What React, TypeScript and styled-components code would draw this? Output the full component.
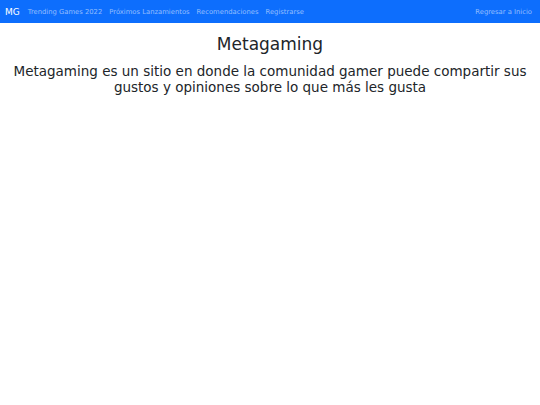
import React from "react";
import styled, { createGlobalStyle } from "styled-components";

const Global = createGlobalStyle`
  html, body { margin: 0; padding: 0; background: #fff; }
  body { font-family: "DejaVu Sans", sans-serif; color: #212529; }
`;

const Navbar = styled.nav`
  height: 23px;
  background: #0d6efd;
  display: flex;
  align-items: center;
  padding: 0 8px 0 5px;
  box-sizing: border-box;
`;

const Brand = styled.a`
  color: #fff;
  font-size: 9px;
  margin-right: 8px;
  text-decoration: none;
`;

const Links = styled.div`
  display: flex;
  gap: 7px;
  flex: 1;
`;

const NavLink = styled.a`
  color: rgba(255, 255, 255, 0.55);
  font-size: 6.8px;
  text-decoration: none;
  white-space: nowrap;
`;

const Main = styled.main`
  text-align: center;
  padding: 11px 8px 0;
`;

const Title = styled.h1`
  font-size: 17px;
  font-weight: 400;
  margin: 0 0 9px;
  line-height: 20px;
`;

const Lead = styled.p`
  font-size: 13.5px;
  line-height: 16px;
  margin: 0;
`;

export default function App() {
  return (
    <>
      <Global />
      <Navbar>
        <Brand>MG</Brand>
        <Links>
          <NavLink>Trending Games 2022</NavLink>
          <NavLink>Próximos Lanzamientos</NavLink>
          <NavLink>Recomendaciones</NavLink>
          <NavLink>Registrarse</NavLink>
        </Links>
        <NavLink>Regresar a Inicio</NavLink>
      </Navbar>
      <Main>
        <Title>Metagaming</Title>
        <Lead>
          Metagaming es un sitio en donde la comunidad gamer puede compartir sus
          gustos y opiniones sobre lo que más les gusta
        </Lead>
      </Main>
    </>
  );
}
